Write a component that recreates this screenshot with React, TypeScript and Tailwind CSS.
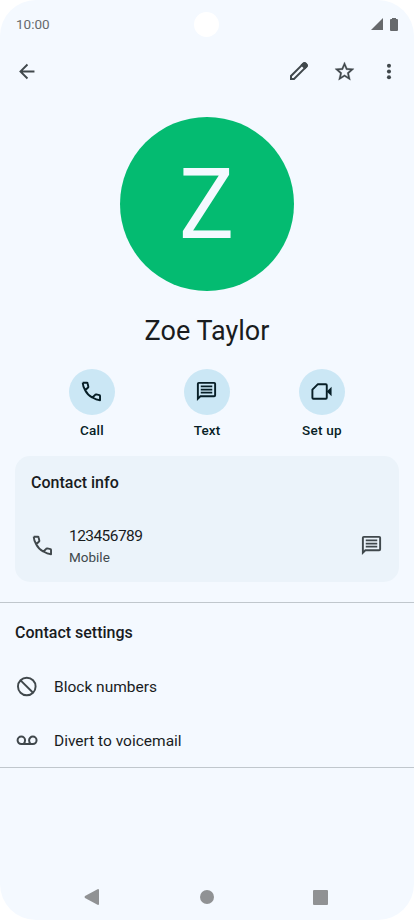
import React from "react";

type IconProps = { size?: number; className?: string };

function Icon({ size = 23, className = "", children }: IconProps & { children: React.ReactNode }) {
  return (
    <svg width={size} height={size} viewBox="0 0 24 24" fill="currentColor" className={"block shrink-0 " + className}>
      {children}
    </svg>
  );
}

const BackIcon = () => (
  <Icon>
    <path d="M20.300 11H8.130l5.590-5.590L12.300 4l-8 8 8 8 1.410-1.410L8.130 13H20.300z" />
  </Icon>
);

const PencilIcon = () => (
  <Icon size={24}>
    <path fill="none" stroke="currentColor" strokeWidth="2" d="M4 20v-3L16.400 4.600a1.400 1.400 0 0 1 2 0l1 1a1.400 1.400 0 0 1 0 2L7 20z" />
    <path d="M13.500 6.100 16 3.600q1.500-1.200 3 0l1.400 1.400q1.200 1.500 0 3L17.900 10.500z" />
  </Icon>
);

const StarIcon = () => (
  <Icon>
    <path d="M22 9.240l-7.190-.62L12 2 9.190 8.630 2 9.240l5.460 4.730L5.820 21 12 17.270 18.180 21l-1.630-7.030zM12 15.400l-3.760 2.270 1-4.280-3.320-2.880 4.380-.38L12 6.100l1.710 4.040 4.380.38-3.320 2.880 1 4.280z" stroke="currentColor" strokeWidth="0.300" />
  </Icon>
);

const MoreIcon = () => (
  <Icon>
    <circle cx="12.500" cy="6" r="2.100" />
    <circle cx="12.500" cy="12" r="2.100" />
    <circle cx="12.500" cy="18" r="2.100" />
  </Icon>
);

const CallIcon = () => (
  <Icon>
    <path
      fill="none"
      stroke="currentColor"
      strokeWidth="2"
      strokeLinejoin="round"
      d="M2.800 2.900h4.500q.5 0 .6.500l.8 3.500q.1.500-.3.900L5.400 10.700C7 14 9.400 16.500 13 18.300M5.400 10.700C3.800 8 3 5.700 2.800 2.900M13 18.300l3.100-3.100q.4-.3.900-.2l3.300.8q.6.200.6.800v4.500c-2.800-.2-5.400-1.200-7.900-2.800z"
    />
  </Icon>
);

const MessageIcon = () => (
  <Icon>
    <path d="M4 2h16a2 2 0 0 1 2 2v12a2 2 0 0 1-2 2H6l-4 4V4a2 2 0 0 1 2-2zm0 2v13.200L5.200 16H20V4zM6 5.700h12v1.900H6zm0 3.300h12v1.900H6zm0 3.300h12v1.900H6z" />
  </Icon>
);

const VideoIcon = () => (
  <Icon>
    <path fill="none" stroke="currentColor" strokeWidth="2" strokeLinejoin="round" d="M8 4.500h8.500a1 1 0 0 1 1 1v13a1 1 0 0 1-1 1h-13a1 1 0 0 1-1-1V10z" />
    <path d="m17.500 12 5-5v10z" />
  </Icon>
);

const BlockIcon = () => (
  <Icon>
    <path fill="none" stroke="currentColor" strokeWidth="2" d="M21.500 12a9.200 9.200 0 1 1-18.400 0 9.200 9.200 0 0 1 18.400 0zM5.840 5.540l13 13" />
  </Icon>
);

const VoicemailIcon = () => (
  <Icon>
    <path fill="none" stroke="currentColor" strokeWidth="2.100" d="M6.600 15.700a3.900 3.900 0 1 1 3.900-3.900c0 1.600-.7 3-1.600 3.900h7.400c-.9-.9-1.600-2.300-1.600-3.900a3.900 3.900 0 1 1 3.900 3.900zM6.600 15.700h12" />
  </Icon>
);

function Action({ label, labelClass, children }: { label: string; labelClass: string; children: React.ReactNode }) {
  return (
    <button className="flex w-[115px] flex-col items-center text-[#071e26]">
      <span className="flex size-[46px] items-center justify-center rounded-full bg-[#cbe7f5] pr-px pb-px">{children}</span>
      <span className={"mt-1.5 whitespace-nowrap text-[13.500px] leading-[18px] font-medium " + labelClass}>{label}</span>
    </button>
  );
}

export default function App() {
  return (
    <div className="h-[920px] w-[414px] bg-white font-['Roboto','Liberation_Sans',sans-serif]">
      <div className="flex h-full flex-col overflow-hidden rounded-[36px] bg-[#f4f9ff] text-[#191c1e]">
        <header className="flex h-12 shrink-0 items-center justify-between pr-4 pl-4 text-[#66696c]">
          <span className="w-[160px] text-[13.500px]">10:00</span>
          <span className="mr-px size-[25px] rounded-full bg-white" />
          <div className="flex w-[160px] items-center justify-end gap-[7px]">
            <svg width="12" height="12" viewBox="0 0 12 12" fill="currentColor"><path d="M0 12 12 0v12z" /></svg>
            <svg width="8" height="13" viewBox="0 0 8 13" fill="currentColor"><path d="M2 0h4v1h1q1 0 1 1v10q0 1-1 1H1q-1 0-1-1V2q0-1 1-1h1z" /></svg>
          </div>
        </header>

        <nav className="flex h-[46px] shrink-0 items-center justify-between pr-[14px] pl-[15px] text-[#40484c]">
          <BackIcon />
          <div className="flex items-center">
            <PencilIcon />
            <span className="ml-[22px]"><StarIcon /></span>
            <span className="ml-[21px]"><MoreIcon /></span>
          </div>
        </nav>

        <section className="flex shrink-0 flex-col items-center pt-[23px]">
          <div className="mr-px flex size-[174px] items-center justify-center rounded-full bg-[#04bb71]">
            <span className="scale-x-[0.93] pt-px text-[99px] leading-none text-[#f4f9ff]">Z</span>
          </div>
          <h1 className="mt-[22px] text-[27px] leading-9 whitespace-nowrap">Zoe Taylor</h1>
        </section>

        <div className="mt-[20px] flex shrink-0 justify-center">
          <Action label="Call" labelClass="tracking-[0.200px]"><CallIcon /></Action>
          <Action label="Text" labelClass="tracking-[0.100px]"><MessageIcon /></Action>
          <Action label="Set up" labelClass="tracking-[0.250px]"><VideoIcon /></Action>
        </div>

        <section className="mx-[15px] mt-[17px] h-[126px] shrink-0 rounded-[15px] bg-[#ebf3fa] px-4 pt-4">
          <h2 className="text-[16px] leading-[22px] font-medium">Contact info</h2>
          <div className="mt-[29px] flex items-center text-[#40484c]">
            <CallIcon />
            <div className="ml-[15px] flex flex-1 flex-col pt-0.5">
              <span className="text-[15.500px] leading-[22px] tracking-[-0.560px] text-[#191c1e]">123456789</span>
              <span className="text-[13.500px] leading-5">Mobile</span>
            </div>
            <MessageIcon />
          </div>
        </section>

        <section className="mt-[20px] h-[166px] shrink-0 border-y border-[#c0c7cd] px-[15px] pt-[19px]">
          <h2 className="text-[16px] leading-[22px] font-medium">Contact settings</h2>
          <div className="mt-[31px] flex h-[23px] items-center gap-4">
            <span className="text-[#40484c]"><BlockIcon /></span>
            <span className="pt-0.5 text-[15.500px]">Block numbers</span>
          </div>
          <div className="mt-[31px] flex h-[23px] items-center gap-4">
            <span className="text-[#40484c]"><VoicemailIcon /></span>
            <span className="pt-0.5 text-[15.500px]">Divert to voicemail</span>
          </div>
        </section>

        <footer className="mt-auto flex h-[46px] shrink-0 items-center justify-between pr-[86px] pl-[84px] text-[#909294]">
          <svg width="15" height="16" viewBox="0 0 15 16" fill="currentColor"><path d="M14 0q1 0 1 1v14q0 1-1 1L1 9q-1-1 0-2z" /></svg>
          <span className="ml-px size-[14px] rounded-full bg-current" />
          <span className="size-[15px] rounded-[1px] bg-current" />
        </footer>
      </div>
    </div>
  );
}
